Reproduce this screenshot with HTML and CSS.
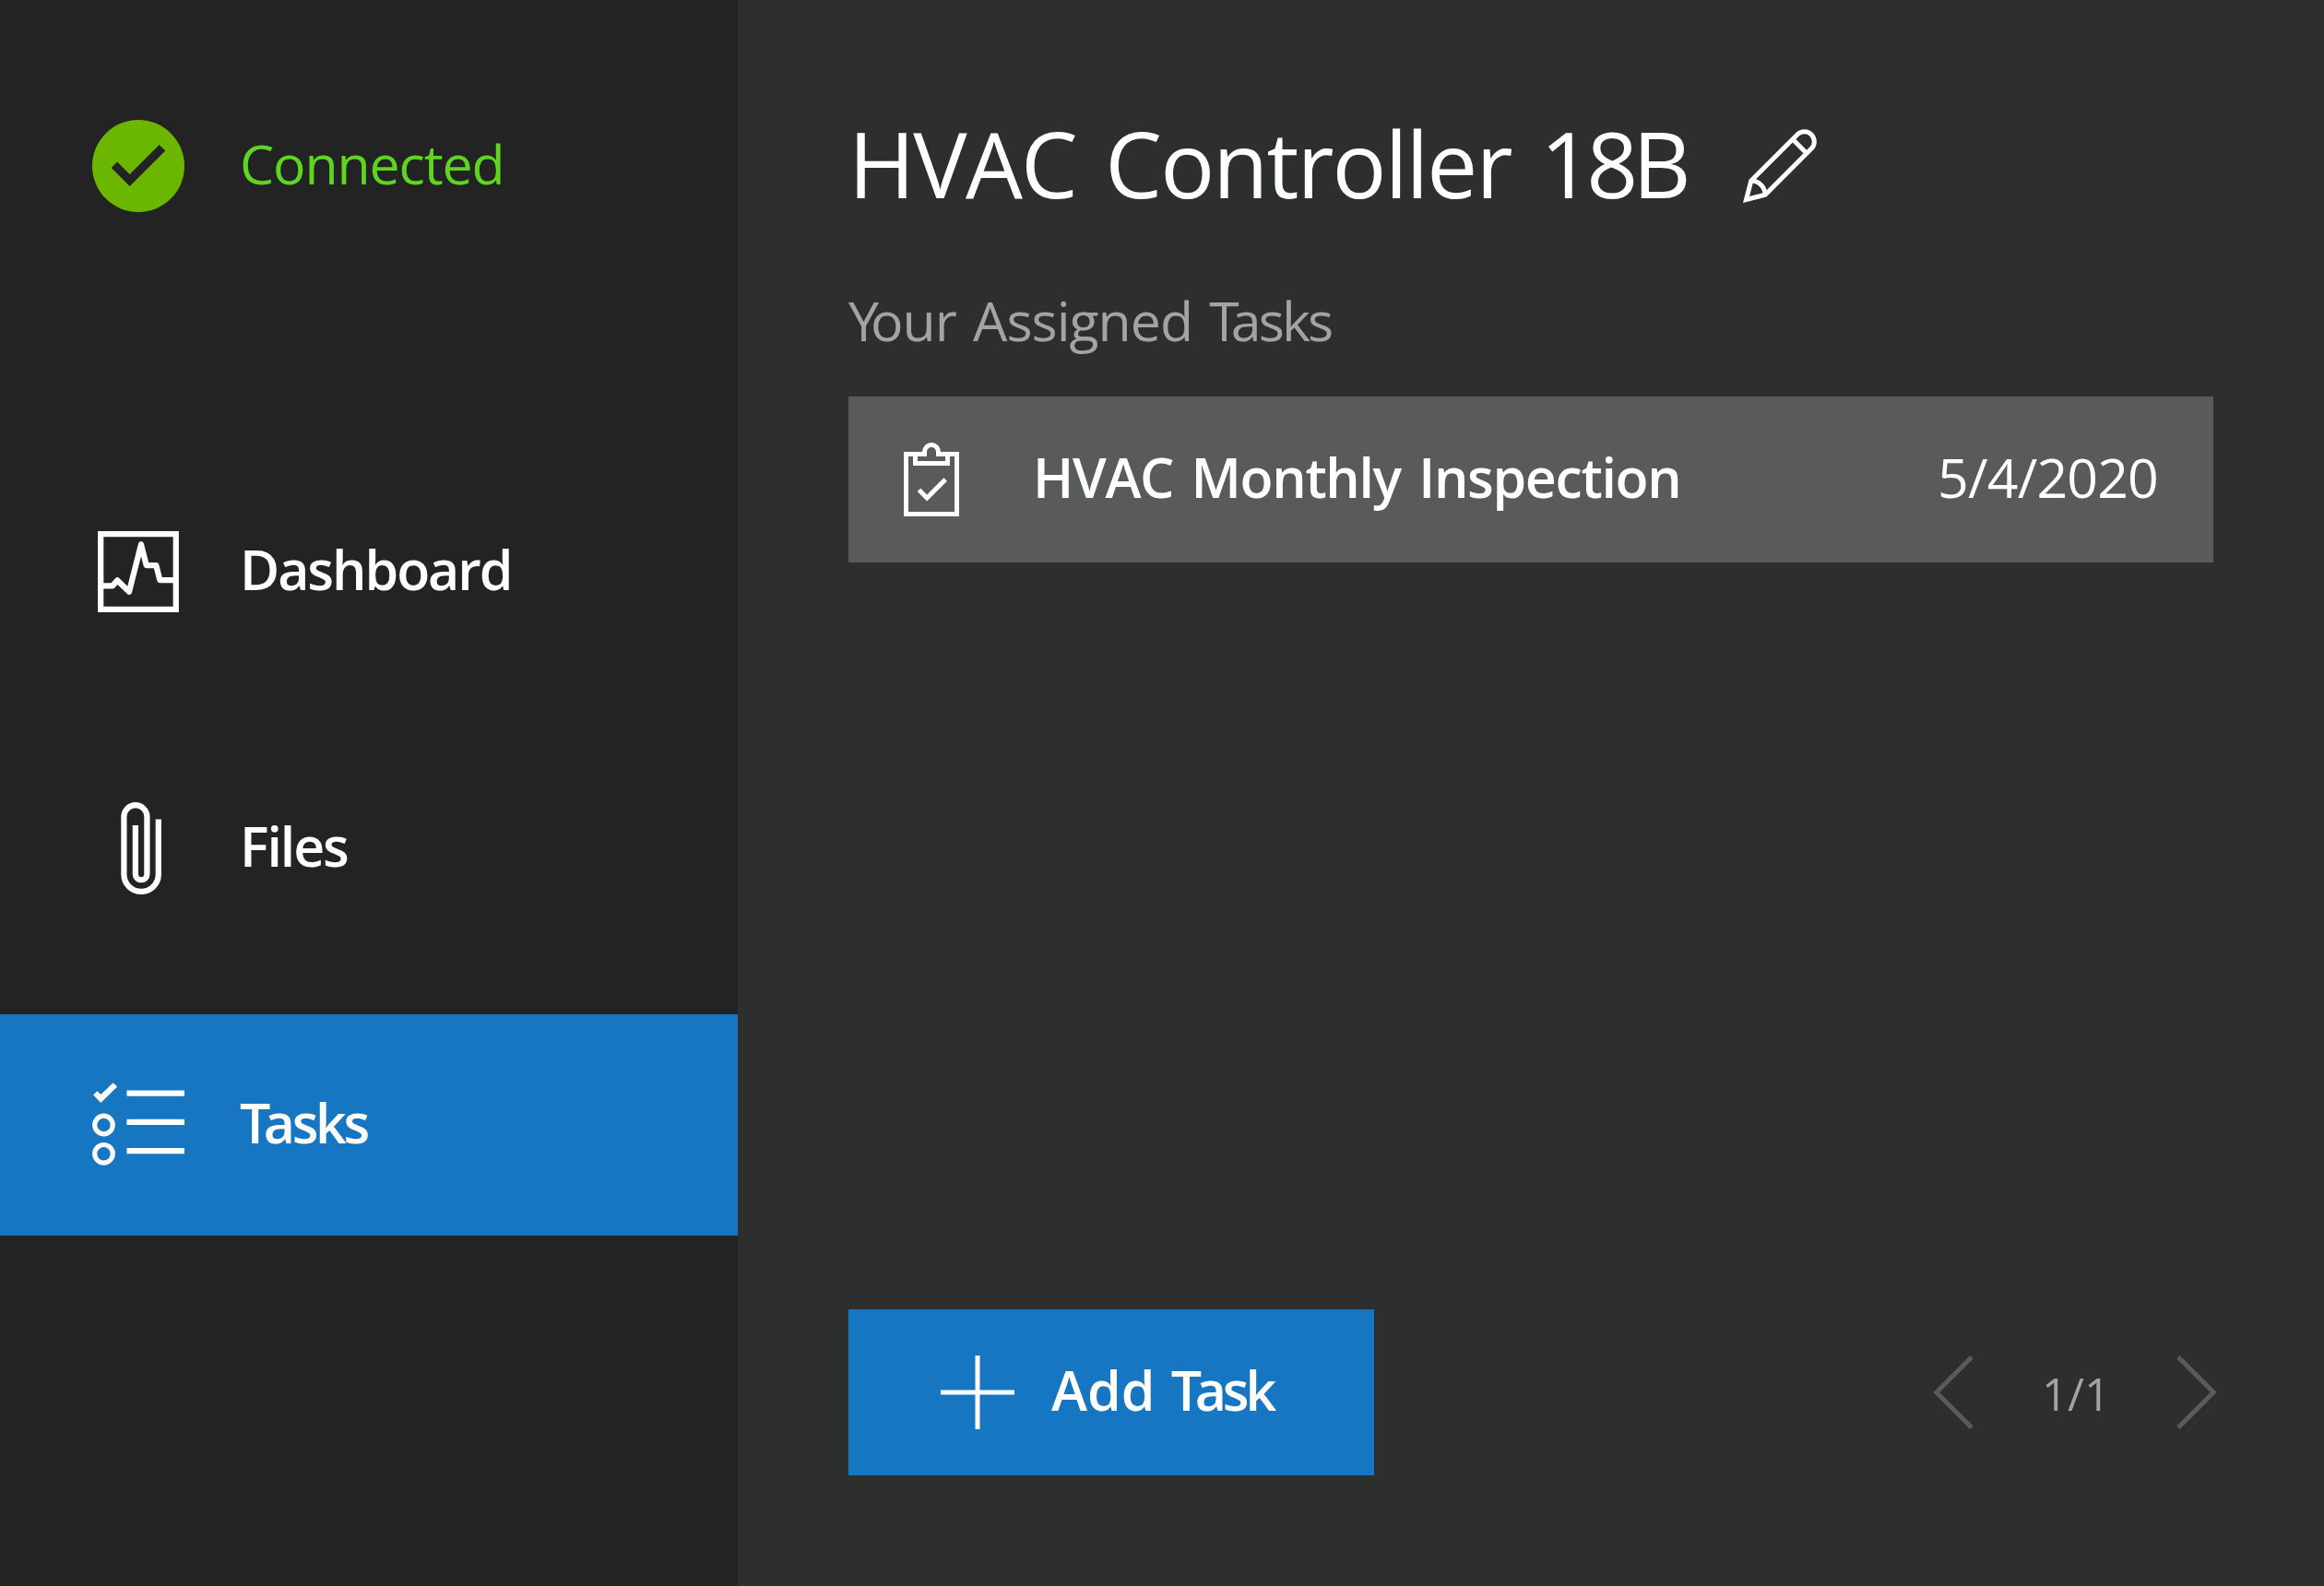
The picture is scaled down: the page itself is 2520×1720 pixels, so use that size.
FILE: index.html
```
<!DOCTYPE html>
<html lang="en">
<head>
<meta charset="utf-8">
<title>HVAC Controller 18B</title>
<link rel="stylesheet" href="styles.css">
</head>
<body>
<div class="app">
  <aside class="sidebar">
    <div class="status">
      <svg class="icon" viewBox="0 0 100 100"><circle cx="50" cy="50" r="50" fill="#6bb700"/><path fill="#232323" d="M20.7 51.9 27.1 45.6 40.7 59 72.7 27 79.3 33.4 40.7 72z"/></svg>
      <span class="label connected">Connected</span>
    </div>
    <nav class="nav">
      <a class="item"><svg class="icon line" viewBox="0 0 100 100"><path d="M9.2 9.2H90.8V90.8H9.2z"/><path stroke-linejoin="round" d="M12 65.4H22L27.3 59.4 40 71.8 53 20.4 58.7 43.1H69.3L73.3 59.1H88"/></svg><span class="label">Dashboard</span></a>
      <a class="item"><svg class="icon line" viewBox="0 0 100 100"><path d="M71.8 18.5V78.2A18.7 18.7 0 0 1 34.4 78.2V15.7A12.5 12.5 0 0 1 59.4 15.7V78A6.25 6.25 0 0 1 46.9 78V25"/></svg><span class="label">Files</span></a>
      <a class="item active"><svg class="icon line" viewBox="0 0 100 100"><path d="M37.5 15.6H100M37.5 46.9H100M37.5 78.1H100"/><circle cx="12.5" cy="50" r="9.8" stroke-width="5.2"/><circle cx="12.5" cy="81.3" r="9.8" stroke-width="5.2"/><path class="solid" d="M1.2 17.6 5.4 13.2 9.3 17.1 22.7 4.2 27.1 8.5 9.3 26z"/></svg><span class="label tight"><span class="kern">T</span>asks</span></a>
    </nav>
  </aside>
  <main class="main">
    <header class="head">
      <h1 class="title">HVAC Controller <span class="unit">18B</span></h1>
      <svg class="edit line" viewBox="0 0 80 80"><path d="M3.5 76.5 8.8 56 59.1 5.8A10.75 10.75 0 0 1 74.3 21L24.1 71.2z"/><path d="M53.8 11 69 26.2M8.8 56A15.4 15.4 0 0 1 24.1 71.2"/></svg>
    </header>
    <h2 class="subtitle"><span class="kern">Y</span>our Assigned <span class="tight"><span class="kern">T</span>asks</span></h2>
    <div class="task">
      <svg class="clip line" viewBox="0 0 80 80"><path d="M12.5 12.5H32.5V10A7.5 7.5 0 0 1 47.5 10V12.5H67.5V77.5H12.5z"/><path d="M22.5 12.5V22.5H57.5V12.5"/><path class="solid" d="M24.7 53.1 28.2 49.5 35.2 56.4 53.4 38.2 57 41.7 35.2 63.5z"/></svg>
      <span class="name">HVAC Monthly Inspection</span>
      <span class="date">5/4/2020</span>
    </div>
    <footer class="foot">
      <button class="add"><svg class="plus line" viewBox="0 0 80 80"><path d="M0 40H80M40 0V80"/></svg><span class="addtext">Add <span class="tight"><span class="kern">T</span>ask</span></span></button>
      <div class="pager">
        <svg class="chev" viewBox="0 0 44 80"><path d="M42 1.8 3.8 40 42 78.2"/></svg>
        <span class="page">1/1</span>
        <svg class="chev" viewBox="0 0 44 80"><path d="M2 1.8 40.2 40 2 78.2"/></svg>
      </div>
    </footer>
  </main>
</div>
</body>
</html>
```
FILE: styles.css
```
* { box-sizing: border-box; }
body { margin: 0; font-family: "Open Sans", "Noto Sans", sans-serif; color: #fff; }
.app { display: flex; width: 2520px; height: 1720px; background: #2d2f2e; }
.sidebar { width: 800px; background: #232323; }
.status { display: flex; align-items: center; gap: 60px; height: 240px; margin: 60px 0 200px; padding-left: 100px; color: #5fd421; }
.icon { width: 100px; height: 100px; flex: none; }
.line { fill: none; stroke: #fff; stroke-width: 6.25; }
.line .solid { fill: #fff; stroke: none; }
.nav { display: flex; flex-direction: column; gap: 60px; }
.item { display: flex; align-items: center; gap: 60px; height: 240px; padding-left: 100px; font-weight: 600; }
.active { background: #1776c1; }
.label { font-size: 59px; line-height: 80px; padding-bottom: 6px; letter-spacing: -2.05px; }
.connected { letter-spacing: -1.13px; }
.tight { letter-spacing: -3.4px; }
.kern { letter-spacing: -7.5px; }
.main { flex: 1; display: flex; flex-direction: column; padding: 120px; }
.head { display: flex; align-items: center; height: 120px; }
.title { margin: 0; font-size: 98px; font-weight: 400; line-height: 120px; width: 970px; padding-bottom: 6px; letter-spacing: -1.9px; word-spacing: 8px; white-space: nowrap; }
.unit { letter-spacing: -6px; }
.edit { width: 80px; height: 80px; stroke-width: 5; }
.subtitle { margin: 67px 0 0; height: 123px; font-size: 59px; font-weight: 400; line-height: 80px; color: #a3a3a3; letter-spacing: -1px; word-spacing: 4px; }
.subtitle .tight { letter-spacing: -2.9px; }
.subtitle .kern { letter-spacing: -9px; }
.task { display: flex; align-items: center; height: 180px; padding: 0 60px 0 50px; background: #595b5a; font-size: 59px; line-height: 80px; }
.clip { width: 80px; height: 80px; stroke-width: 5; }
.name { margin-left: 70px; padding-bottom: 6px; font-weight: 600; letter-spacing: -1.35px; word-spacing: 5.5px; }
.date { margin-left: auto; padding-bottom: 6px; letter-spacing: -0.85px; }
.foot { display: flex; justify-content: space-between; align-items: center; margin-top: auto; }
.add { display: flex; align-items: center; width: 570px; height: 180px; padding: 0 0 0 100px; border: 0; background: #1776c1; color: #fff; font: 600 59px/80px "Open Sans", "Noto Sans", sans-serif; }
.plus { width: 80px; height: 80px; stroke-width: 5; }
.addtext { margin-left: 40px; padding-bottom: 6px; word-spacing: 2px; }
.addtext .tight { letter-spacing: -4px; }
.pager { display: flex; align-items: center; margin-right: -4px; color: #a3a3a3; }
.chev { width: 44px; height: 80px; fill: none; stroke: #595b5a; stroke-width: 5; }
.page { width: 220px; padding: 2px 0 0 2px; text-align: center; font-size: 49px; line-height: 80px; }
```
